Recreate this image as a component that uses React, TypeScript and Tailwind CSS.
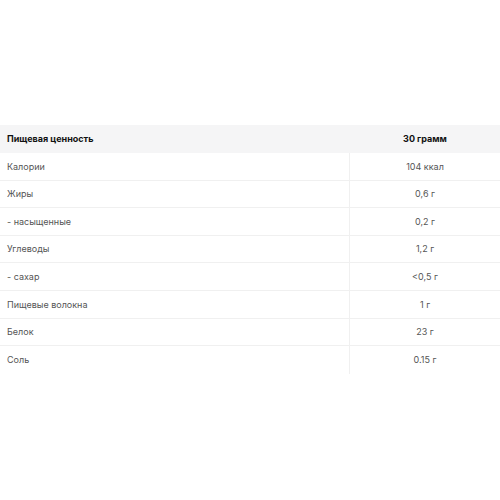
const ROWS = [
  ['Калории', '104 ккал'],
  ['Жиры', '0,6 г'],
  ['- насыщенные', '0,2 г'],
  ['Углеводы', '1,2 г'],
  ['- сахар', '<0,5 г'],
  ['Пищевые волокна', '1 г'],
  ['Белок', '23 г'],
  ['Соль', '0.15 г'],
];

export default function App() {
  return (
    <div className="min-h-[500px] w-[500px] bg-white pt-[125px] font-['Inter',sans-serif]">
      <div className="flex h-[28px] items-center bg-[#f5f5f6] text-[9px] font-bold text-[#111]">
        <div className="w-[350px] pl-[7px]">Пищевая ценность</div>
        <div className="flex-1 text-center">30 грамм</div>
      </div>
      {ROWS.map(([name, value], i) => (
        <div
          key={name}
          className={
            'flex h-[27.6px] items-stretch text-[9px] text-[#555] ' +
            (i < ROWS.length - 1 ? 'border-b border-[#f0f0f0]' : '')
          }
        >
          <div className="flex w-[350px] items-center border-r border-[#f0f0f0] pl-[7px]">{name}</div>
          <div className="flex flex-1 items-center justify-center">{value}</div>
        </div>
      ))}
    </div>
  );
}
